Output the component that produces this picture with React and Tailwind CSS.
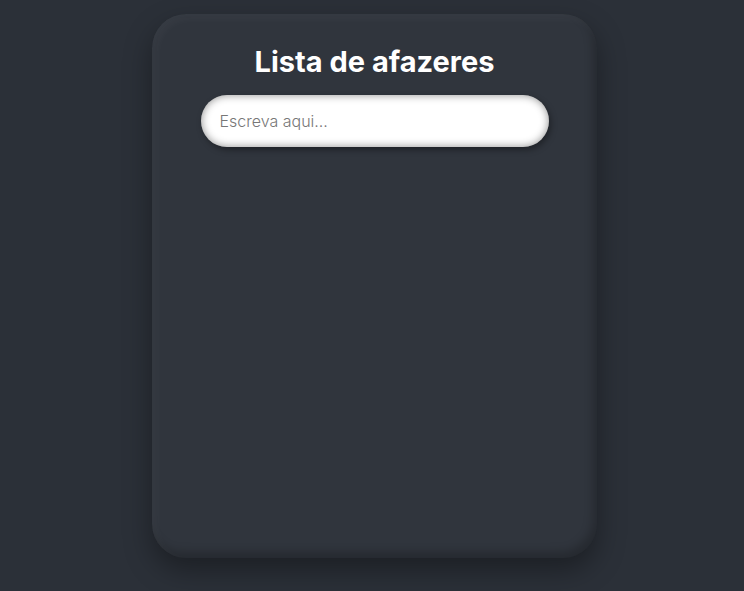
import React from 'react';

const App = () => {
  return (
    <div
      className="min-h-screen w-full bg-[#2b3038] flex justify-center pt-[14px] pl-[5px]"
      style={{ fontFamily: '"Inter", "Noto Sans", sans-serif' }}
    >
      <div className="w-[445px] h-[544px] rounded-[34px] bg-[#30353d] shadow-[0_12px_28px_rgba(0,0,0,0.35),inset_4px_4px_10px_rgba(255,255,255,0.04),inset_-4px_-6px_10px_rgba(0,0,0,0.22)] flex flex-col items-center pt-[29px]">
        <h1 className="text-[29px] font-bold text-white leading-[38px] tracking-[0px]">
          Lista de afazeres
        </h1>
        <input
          type="text"
          autoFocus
          placeholder="Escreva aqui..."
          className="mt-[14px] w-[348px] h-[52px] rounded-full bg-white px-[19px] text-[16px] font-light text-gray-700 placeholder:text-[#777] outline-none shadow-[inset_0_0_8px_rgba(0,0,0,0.45),2px_3px_6px_rgba(0,0,0,0.35)]"
        />
      </div>
    </div>
  );
};

export default App;
